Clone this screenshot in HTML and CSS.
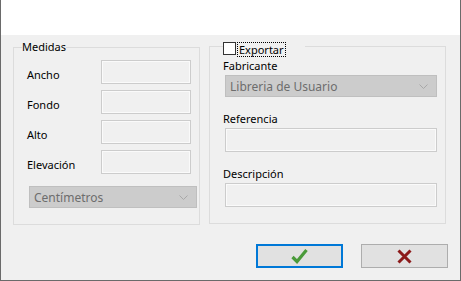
FILE: index.html
```html
<!DOCTYPE html>
<html lang="es">
<head>
    <meta charset="UTF-8">
    <title>Propiedades</title>
    <link rel="stylesheet" href="styles.css">
</head>
<body>
    <div class="window">
        <!-- White title area -->
        <div class="top-area"></div>

        <div class="content">
            <div class="groups">
                <!-- Medidas -->
                <fieldset class="group group-medidas">
                    <legend>Medidas</legend>
                    <div class="size-rows">
                        <label class="size-label">Ancho</label>
                        <input type="text" class="field field-small" disabled>
                        <label class="size-label">Fondo</label>
                        <input type="text" class="field field-small" disabled>
                        <label class="size-label">Alto</label>
                        <input type="text" class="field field-small" disabled>
                        <label class="size-label">Elevación</label>
                        <input type="text" class="field field-small" disabled>
                    </div>
                    <div class="combo combo-units">
                        <span>Centímetros</span>
                        <svg class="chevron" width="9" height="5" viewBox="0 0 9 5"><path d="M0.5 0.5 L4.5 4.5 L8.5 0.5" fill="none" stroke="#a8a8a8" stroke-width="1"/></svg>
                    </div>
                </fieldset>

                <!-- Exportar -->
                <fieldset class="group group-export">
                    <legend class="export-legend">
                        <span class="check-row">
                            <span class="check-box"></span>
                            <span class="check-text">Exportar</span>
                        </span>
                    </legend>
                    <label class="field-label label-first">Fabricante</label>
                    <div class="combo combo-maker">
                        <span>Libreria de Usuario</span>
                        <svg class="chevron" width="9" height="5" viewBox="0 0 9 5"><path d="M0.5 0.5 L4.5 4.5 L8.5 0.5" fill="none" stroke="#a8a8a8" stroke-width="1"/></svg>
                    </div>
                    <label class="field-label">Referencia</label>
                    <input type="text" class="field field-wide" disabled>
                    <label class="field-label">Descripción</label>
                    <input type="text" class="field field-wide" disabled>
                </fieldset>
            </div>

            <div class="buttons">
                <button class="btn btn-ok">
                    <svg width="17" height="16" viewBox="0 0 17 16"><path d="M1.5 9 L6 13.5 L15.5 2" fill="none" stroke="#4a9a3a" stroke-width="3.2"/></svg>
                </button>
                <button class="btn btn-cancel">
                    <svg width="15" height="15" viewBox="0 0 15 15"><path d="M1.5 1.5 L13.5 13.5 M13.5 1.5 L1.5 13.5" fill="none" stroke="#8c1b1b" stroke-width="3"/></svg>
                </button>
            </div>
        </div>
    </div>
</body>
</html>
```

FILE: styles.css
```css
/* General Styles */
html, body {
    margin: 0;
    padding: 0;
}

body {
    font-family: 'Noto Sans', 'DejaVu Sans', sans-serif;
    font-size: 11px;
    color: #000;
    background: #f0f0f0;
}

.window {
    width: 461px;
    height: 281px;
    box-sizing: border-box;
    border-left: 1px solid #6a6a6a;
    border-right: 1px solid #6a6a6a;
    border-bottom: 1px solid #6a6a6a;
    background: #f0f0f0;
    display: flex;
    flex-direction: column;
}

.top-area {
    height: 35px;
    background: #fff;
}

.content {
    padding: 2px 12px 0 12px;
    display: flex;
    flex-direction: column;
}

.groups {
    display: flex;
    align-items: flex-start;
    gap: 9px;
}

/* Group boxes */
.group {
    margin: 0;
    border: 1px solid #dcdcdc;
    box-sizing: border-box;
    min-width: 0;
}

.group legend {
    padding: 0;
    line-height: 14px;
}

.group-medidas {
    width: 187px;
    margin-top: 3px;
    padding: 6px 2px 16px 8px;
}

.size-rows {
    display: grid;
    grid-template-columns: 74px 90px;
    grid-auto-rows: 24px;
    row-gap: 6px;
    margin-left: 5px;
}

.size-label {
    line-height: 24px;
    padding-top: 3px;
}

.group-export {
    width: 237px;
    padding: 3px 7px 16px 13px;
    display: flex;
    flex-direction: column;
}

.group .export-legend {
    display: block;
    width: 82px;
    height: 18px;
    padding: 0;
}

.check-row {
    display: flex;
    align-items: flex-end;
    height: 18px;
}

.check-box {
    width: 11px;
    height: 11px;
    border: 1px solid #333;
    background: #fff;
}

.check-text {
    margin-left: 2px;
    line-height: 13px;
    outline: 1px dotted #000;
    padding: 0 1px;
    margin-bottom: -1px;
}

.field-label {
    line-height: 15px;
    margin-top: 14px;
    margin-bottom: 2px;
}

.field-label.label-first {
    margin-top: 0;
}

/* Inputs */
.field {
    box-sizing: border-box;
    height: 24px;
    margin: 0;
    padding: 0 4px;
    border: 1px solid #cccccc;
    box-shadow: inset 0 0 0 1px #fafafa;
    background: #f0f0f0;
    font: inherit;
}

.field-small {
    width: 90px;
}

.field-wide {
    width: 212px;
    margin-left: 2px;
}

/* Combo boxes */
.combo {
    box-sizing: border-box;
    height: 22px;
    display: flex;
    align-items: center;
    justify-content: space-between;
    padding: 0 8px 0 4px;
    background: #cccccc;
    border: 1px solid #bfbfbf;
    color: #6d6d6d;
    font-size: 12px;
}

.combo-units {
    width: 168px;
    margin-top: 12px;
    margin-left: 7px;
}

.combo-maker {
    width: 212px;
    margin-left: 2px;
}

/* Buttons */
.buttons {
    display: flex;
    justify-content: flex-end;
    gap: 18px;
    margin-top: 19px;
}

.btn {
    width: 87px;
    height: 24px;
    box-sizing: border-box;
    background: #e1e1e1;
    border: 1px solid #adadad;
    display: flex;
    align-items: center;
    justify-content: center;
    padding: 0;
}

.btn-ok {
    border: 2px solid #0078d7;
}
```
